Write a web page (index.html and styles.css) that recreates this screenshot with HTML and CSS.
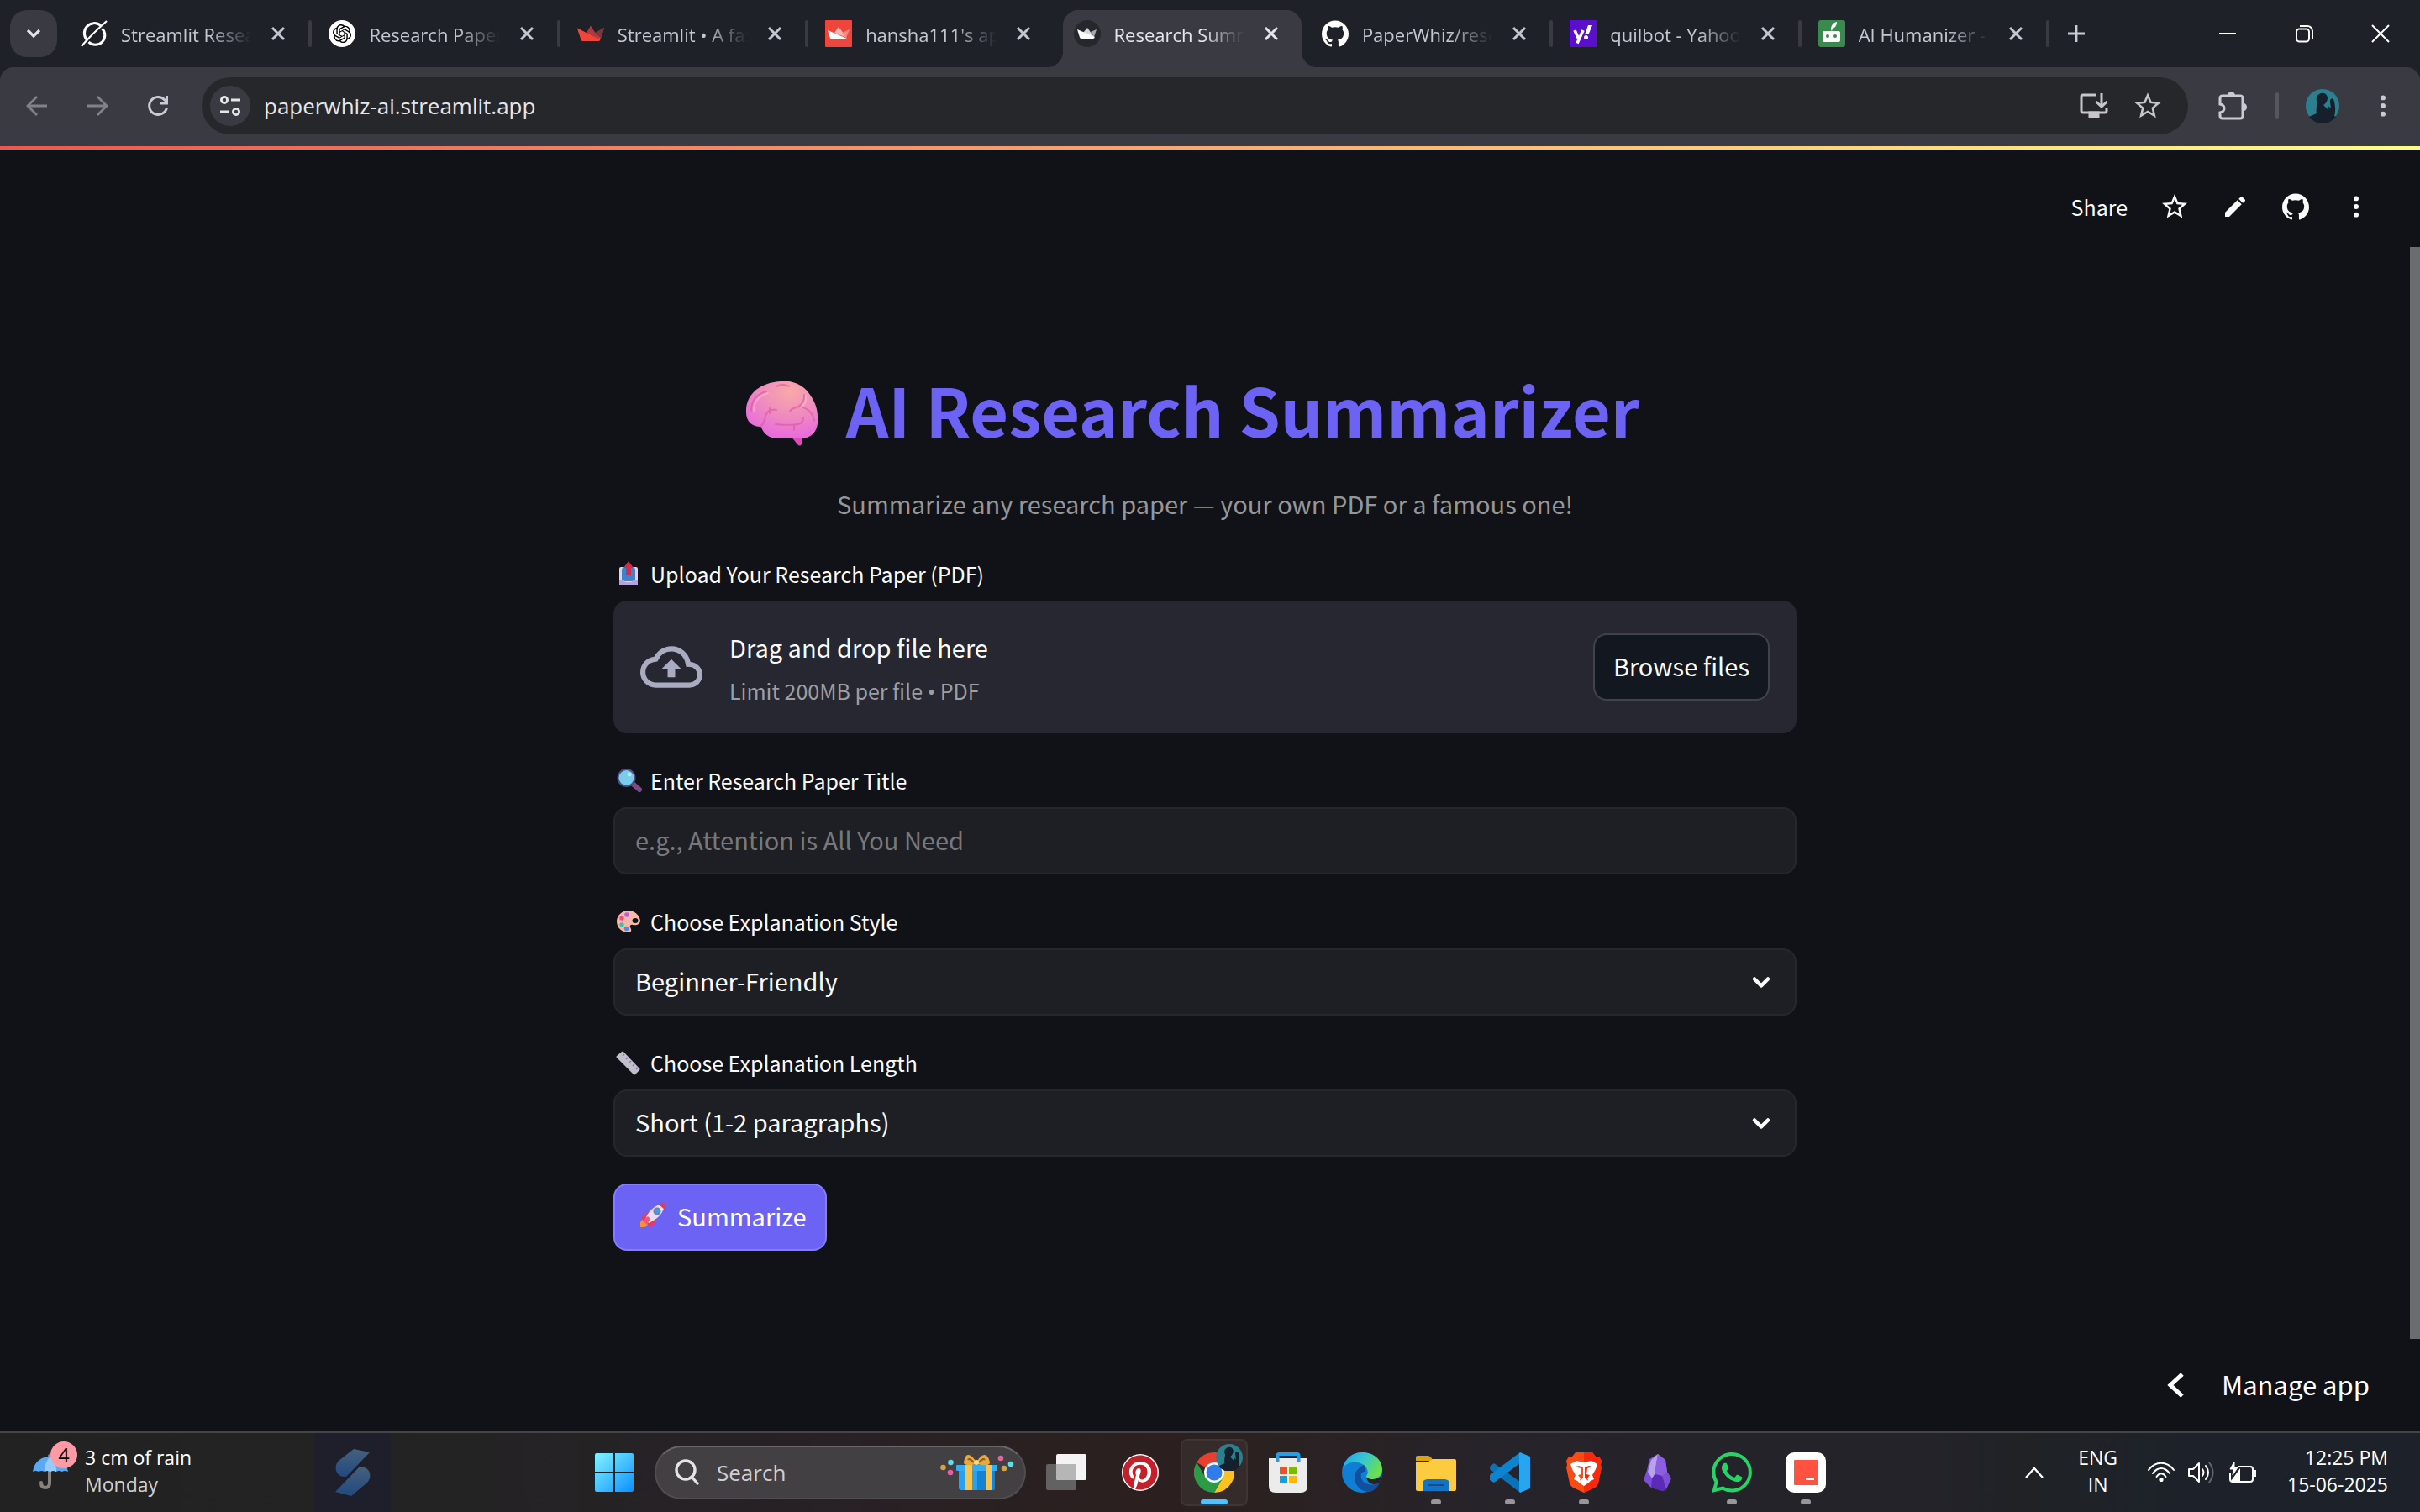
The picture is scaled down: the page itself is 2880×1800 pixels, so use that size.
FILE: index.html
```html
<!DOCTYPE html>
<html lang="en">
<head>
<meta charset="utf-8">
<title>Research Summarizer</title>
<link rel="stylesheet" href="styles.css">
</head>
<body>
<svg class="defs" width="0" height="0" aria-hidden="true">
  <defs>
    <symbol id="close" viewBox="0 0 32 32"><path d="M9 9l14 14M23 9L9 23" fill="none" stroke="currentColor" stroke-width="3"/></symbol>
    <symbol id="dots" viewBox="0 0 32 32"><circle cx="16" cy="5" r="3.4"/><circle cx="16" cy="16" r="3.4"/><circle cx="16" cy="27" r="3.4"/></symbol>
    <symbol id="star" viewBox="0 0 24 24"><path d="M22 9.24l-7.19-.62L12 2 9.19 8.63 2 9.24l5.46 4.73L5.82 21 12 17.27 18.18 21l-1.63-7.03L22 9.24zM12 15.4l-3.76 2.27 1-4.28-3.32-2.88 4.38-.38L12 6.1l1.71 4.04 4.38.38-3.32 2.88 1 4.28L12 15.4z"/></symbol>
    <symbol id="github" viewBox="0 0 24 24"><path d="M12 .297c-6.63 0-12 5.373-12 12 0 5.303 3.438 9.8 8.205 11.385.6.113.82-.258.82-.577 0-.285-.01-1.04-.015-2.04-3.338.724-4.042-1.61-4.042-1.61C4.422 18.07 3.633 17.7 3.633 17.7c-1.087-.744.084-.729.084-.729 1.205.084 1.838 1.236 1.838 1.236 1.07 1.835 2.809 1.305 3.495.998.108-.776.417-1.305.76-1.605-2.665-.3-5.466-1.332-5.466-5.93 0-1.31.465-2.38 1.235-3.22-.135-.303-.54-1.523.105-3.176 0 0 1.005-.322 3.3 1.23.96-.267 1.98-.399 3-.405 1.02.006 2.04.138 3 .405 2.28-1.552 3.285-1.23 3.285-1.23.645 1.653.24 2.873.12 3.176.765.84 1.23 1.91 1.23 3.22 0 4.61-2.805 5.625-5.475 5.92.42.36.81 1.096.81 2.22 0 1.606-.015 2.896-.015 3.286 0 .315.21.69.825.57C20.565 22.092 24 17.592 24 12.297c0-6.627-5.373-12-12-12"/></symbol>
    <symbol id="avatar" viewBox="0 0 40 40"><circle cx="20" cy="20" r="20" fill="#2b7f8e"/><path d="M4 33c3-2 7-3 9-4-1-4 0-9 1-13-2-2-2-8 2-10 5-3 10 0 10 5 0 3-2 5-3 7 3 1 5 3 7 5l-1-7c-1-3 2-6 4-4 2 5 3 14 1 20l2 1A20 20 0 0 1 4 33z" fill="#15202c"/><path d="M21 19l6-4v10z" fill="#2b7f8e"/></symbol>
    <symbol id="down" viewBox="0 0 24 24"><path d="M4 8.500l8 8 8-8" fill="none" stroke="currentColor" stroke-width="4.500" stroke-linecap="round" stroke-linejoin="round"/></symbol>
  </defs>
</svg>

<header class="browser">
  <div class="tabstrip">
    <button class="tab-search" aria-label="Search tabs"><svg width="24" height="24" viewBox="0 0 24 24"><path d="M5 8l7 7 7-7" fill="none" stroke="#e3e3e8" stroke-width="3.200"/></svg></button>
    <nav class="tabs" aria-label="Tabs">
      <div class="tab">
        <svg class="favicon" viewBox="0 0 32 32" fill="none" stroke="#fff"><path d="M24 6.500A11 11 0 1 0 8.500 24.500M9.500 26A11 11 0 0 0 25.500 10" stroke-width="3"/><path d="M31 1C22 9 6 25 1 31" stroke-width="2.200"/></svg>
        <span class="tab-title">Streamlit Research</span>
        <button class="tab-close" aria-label="Close tab"><svg width="32" height="32"><use href="#close"/></svg></button>
      </div>
      <div class="tab">
        <svg class="favicon" viewBox="0 0 32 32"><circle cx="16" cy="16" r="16" fill="#fff"/><path transform="translate(5 5) scale(.92)" d="M22.2819 9.8211a5.9847 5.9847 0 0 0-.5157-4.9108 6.0462 6.0462 0 0 0-6.5098-2.9A6.0651 6.0651 0 0 0 4.9807 4.1818a5.9847 5.9847 0 0 0-3.9977 2.9 6.0462 6.0462 0 0 0 .7427 7.0966 5.98 5.98 0 0 0 .511 4.9107 6.051 6.051 0 0 0 6.5146 2.9001A5.9847 5.9847 0 0 0 13.2599 24a6.0557 6.0557 0 0 0 5.7718-4.2058 5.9894 5.9894 0 0 0 3.9977-2.9001 6.0557 6.0557 0 0 0-.7475-7.0729zm-9.022 12.6081a4.4755 4.4755 0 0 1-2.8764-1.0408l.1419-.0804 4.7783-2.7582a.7948.7948 0 0 0 .3927-.6813v-6.7369l2.02 1.1686a.071.071 0 0 1 .038.052v5.5826a4.504 4.504 0 0 1-4.4945 4.4944zm-9.6607-4.1254a4.4708 4.4708 0 0 1-.5346-3.0137l.142.0852 4.783 2.7582a.7712.7712 0 0 0 .7806 0l5.8428-3.3685v2.3324a.0804.0804 0 0 1-.0332.0615L9.74 19.9502a4.4992 4.4992 0 0 1-6.1408-1.6464zM2.3408 7.8956a4.485 4.485 0 0 1 2.3655-1.9728V11.6a.7664.7664 0 0 0 .3879.6765l5.8144 3.3543-2.0201 1.1685a.0757.0757 0 0 1-.071 0l-4.8303-2.7865A4.504 4.504 0 0 1 2.3408 7.872zm16.5963 3.8558L13.1038 8.364 15.1192 7.2a.0757.0757 0 0 1 .071 0l4.8303 2.7913a4.4944 4.4944 0 0 1-.6765 8.1042v-5.6772a.79.79 0 0 0-.407-.667zm2.0107-3.0231l-.142-.0852-4.7735-2.7818a.7759.7759 0 0 0-.7854 0L9.409 9.2297V6.8974a.0662.0662 0 0 1 .0284-.0615l4.8303-2.7866a4.4992 4.4992 0 0 1 6.6802 4.66zM8.3065 12.863l-2.02-1.1638a.0804.0804 0 0 1-.038-.0567V6.0742a4.4992 4.4992 0 0 1 7.3757-3.4537l-.142.0805L8.704 5.459a.7948.7948 0 0 0-.3927.6813zm1.0976-2.3654l2.602-1.4998 2.6069 1.4998v2.9994l-2.5974 1.4997-2.6067-1.4997Z"/></svg>
        <span class="tab-title">Research Paper Summary</span>
        <button class="tab-close" aria-label="Close tab"><svg width="32" height="32"><use href="#close"/></svg></button>
      </div>
      <div class="tab">
        <svg class="favicon" viewBox="0 0 32 32"><path d="M0 9.500l11 6L16 7l5 8.500L32 9l-4.500 14q-.5 2-2.500 2H7q-2 0-2.500-2z" fill="#f0453a"/><path d="M21 15.500L32 9l-4 13z" fill="#7d353b"/><path d="M11 15.500L16 7l11 16z" fill="#ad3b3c"/><path d="M0 9.500l27 14q-1 1.500-2 1.500H7q-2 0-2.500-2z" fill="#f0453a"/></svg>
        <span class="tab-title">Streamlit • A faster way</span>
        <button class="tab-close" aria-label="Close tab"><svg width="32" height="32"><use href="#close"/></svg></button>
      </div>
      <div class="tab tab-plain">
        <svg class="favicon" viewBox="0 0 32 32"><rect width="32" height="32" rx="1" fill="#f0453a"/><path d="M11 15l5-7 10 13z" fill="#f9b5b0"/><path d="M20 15l9-4-4 10z" fill="#f58a83"/><path d="M3 12l23 10q-1 1-2 1H8q-1.500 0-2-1.500z" fill="#fff"/></svg>
        <span class="tab-title">hansha111's apps</span>
        <button class="tab-close" aria-label="Close tab"><svg width="32" height="32"><use href="#close"/></svg></button>
      </div>
      <div class="tab tab-plain tab-active" aria-current="page">
        <svg class="favicon" viewBox="0 0 32 32"><circle cx="16" cy="16" r="16" fill="#26272d"/><path d="M11 15l5-6 8 11z" fill="#d8d8da"/><path d="M20 14l7-3-3 9z" fill="#a9a9ad"/><path d="M4 11l21 9q-1 2-2 2H9q-1.500 0-2-1.500z" fill="#fff"/></svg>
        <span class="tab-title">Research Summarizer</span>
        <button class="tab-close" aria-label="Close tab"><svg width="32" height="32"><use href="#close"/></svg></button>
      </div>
      <div class="tab">
        <svg class="favicon" fill="#fff"><use href="#github"/></svg>
        <span class="tab-title">PaperWhiz/research</span>
        <button class="tab-close" aria-label="Close tab"><svg width="32" height="32"><use href="#close"/></svg></button>
      </div>
      <div class="tab">
        <svg class="favicon" viewBox="0 0 32 32"><rect width="32" height="32" fill="#5b0fce"/><path d="M6 12l4.500 10M16 12L9 27.500" stroke="#fff" stroke-width="3.600" fill="none"/><path d="M22 6h5l-4.500 11h-4.500z" fill="#fff"/><circle cx="19.500" cy="20.500" r="2.500" fill="#fff"/></svg>
        <span class="tab-title">quilbot - Yahoo Search</span>
        <button class="tab-close" aria-label="Close tab"><svg width="32" height="32"><use href="#close"/></svg></button>
      </div>
      <div class="tab">
        <svg class="favicon" viewBox="0 0 32 32"><rect width="32" height="32" rx="3" fill="#3a8a4d"/><rect x="5" y="13" width="21" height="13" rx="2" fill="#fff"/><path d="M15 11c0-4 2-8 7-9 0 4-2 7-5 8l-1 3z" fill="#fff"/><circle cx="11" cy="19" r="2" fill="#3a8a4d"/><circle cx="20" cy="19" r="2" fill="#3a8a4d"/></svg>
        <span class="tab-title">AI Humanizer - Free</span>
        <button class="tab-close" aria-label="Close tab"><svg width="32" height="32"><use href="#close"/></svg></button>
      </div>
    </nav>
    <button class="new-tab" aria-label="New tab"><svg width="24" height="24" viewBox="0 0 24 24"><path d="M12 2v20M2 12h20" stroke="#c9cbd4" stroke-width="2.800"/></svg></button>
    <div class="window-controls">
      <button aria-label="Minimize"><svg width="24" height="24" viewBox="0 0 24 24"><path d="M2 12h20" stroke="#fff" stroke-width="2"/></svg></button>
      <button aria-label="Restore"><svg width="24" height="24" viewBox="0 0 24 24" fill="none" stroke="#fff" stroke-width="2"><rect x="3" y="6.500" width="15" height="15" rx="3.500"/><path d="M7 3h9a6 6 0 0 1 6 6v9"/></svg></button>
      <button aria-label="Close"><svg width="24" height="24" viewBox="0 0 24 24"><path d="M2 2l20 20M22 2L2 22" stroke="#fff" stroke-width="2"/></svg></button>
    </div>
  </div>
  <div class="toolbar">
    <button class="nav-button" aria-label="Back"><svg width="32" height="32" viewBox="0 0 32 32" fill="none" stroke="#818289" stroke-width="2.800"><path d="M28 16H5M16 5L5 16l11 11"/></svg></button>
    <button class="nav-button" aria-label="Forward"><svg width="32" height="32" viewBox="0 0 32 32" fill="none" stroke="#818289" stroke-width="2.800"><path d="M4 16h23M16 5l11 11-11 11"/></svg></button>
    <button class="nav-button" aria-label="Reload"><svg width="32" height="32" viewBox="0 0 32 32" fill="none" stroke="#c9cbd4" stroke-width="3"><path d="M26.500 18A10.500 10.500 0 1 1 24 9l3 3"/><path d="M26.500 4v9H18"/></svg></button>
    <div class="omnibox">
      <button class="site-info" aria-label="View site information"><svg width="28" height="28" viewBox="0 0 28 28" fill="none" stroke="#e6e6ea" stroke-width="2.800"><circle cx="7" cy="7" r="3.600"/><path d="M15 7h11M2 21h11"/><circle cx="21" cy="21" r="3.600"/></svg></button>
      <input class="address" type="text" aria-label="Address" value="paperwhiz-ai.streamlit.app">
      <button aria-label="Install app"><svg width="36" height="32" viewBox="0 0 36 32" fill="none" stroke="#c8c6c8" stroke-width="3"><path d="M20 3H5q-2 0-2 2v17q0 2 2 2h26q2 0 2-2v-4M27 1v15M20.500 11l6.500 6 6.500-6"/><path d="M13 24v5h10v-5z" fill="#c8c6c8"/></svg></button>
      <button aria-label="Bookmark this tab"><svg width="38" height="38" fill="#c8c6c8"><use href="#star"/></svg></button>
    </div>
    <button class="tool" aria-label="Extensions"><svg width="38" height="38" viewBox="0 0 38 38"><path d="M5 12V10q0-3 3-3h21q3 0 3 3v21q0 3-3 3H8q-3 0-3-3v-4q5-1 5-5t-5-5z" fill="none" stroke="#c9cbd4" stroke-width="3"/><path d="M14 7a4.500 5 0 0 1 9 0zM33 16a4 4.500 0 0 1 0 9z" fill="#c9cbd4"/></svg></button>
    <span class="tool-divider"></span>
    <button class="tool" aria-label="Profile"><svg width="40" height="40"><use href="#avatar"/></svg></button>
    <button class="tool" aria-label="Browser menu"><svg width="28" height="28" fill="#c9cbd4"><use href="#dots"/></svg></button>
  </div>
</header>

<div class="app">
  <div class="accent"></div>
  <header class="app-header">
    <button class="share">Share</button>
    <button aria-label="Favorite"><svg width="36" height="36" fill="#fafafa"><use href="#star"/></svg></button>
    <button aria-label="Edit"><svg width="32" height="32" viewBox="0 0 24 24" fill="#fafafa"><path d="M3 17.250V21h3.750L17.810 9.940l-3.750-3.750L3 17.250zM20.710 7.040a1 1 0 0 0 0-1.410l-2.340-2.340a1 1 0 0 0-1.410 0l-1.830 1.830 3.750 3.750 1.830-1.830z"/></svg></button>
    <button aria-label="View source"><svg width="32" height="32" fill="#fafafa"><use href="#github"/></svg></button>
    <button aria-label="App menu"><svg width="28" height="28" fill="#fafafa"><use href="#dots"/></svg></button>
  </header>

  <div class="scroll-area">
    <main class="content">
      <h1 class="title">
        <svg width="88" height="78" viewBox="0 0 88 78" aria-hidden="true">
          <defs><radialGradient id="brain" cx=".62" cy=".18" r=".85"><stop offset="0" stop-color="#f9aaa6"/><stop offset=".5" stop-color="#ef8cbf"/><stop offset="1" stop-color="#e868e0"/></radialGradient></defs>
          <path d="M54 66h14l-1 10q-2 3-5 0z" fill="#e04ab8"/>
          <path d="M43 1C58-1 72 7 79 20c6 9 8 20 7 31-1 11-9 18-19 18H39c-11 0-18-6-20-14C8 55 1 49 1 38 0 16 18 2 43 1z" fill="url(#brain)"/>
          <g fill="none" stroke-linecap="round" stroke-width="2"><path d="M7 36c0-13 7-20 18-23M37 7q8-4 15 0M70 17c1 8-4 12-7 14-6 3-9 2-10 6M63 31c10 1 17 7 19 17M36 52c10 1 22 2 30-1 3-3 3-5 3-7M58 53v6M37 35c-7-1-10 0-13 7-1 7-3 10-6 13M29 33v6" stroke="#d9559c" opacity=".6"/><path d="M10 36c0-11 7-18 17-21M72 18c1 8-3 12-6 14" stroke="#ffc3d5" opacity=".5"/></g>
        </svg>
        <span>AI Research Summarizer</span>
      </h1>
      <p class="subtitle">Summarize any research paper — your own PDF or a famous one!</p>

      <form class="form">
        <div class="field">
          <label class="label" for="upload">
            <svg width="32" height="32" viewBox="0 0 32 32" aria-hidden="true"><rect x="5" y="8" width="22" height="22" rx="2" fill="#ded3ef"/><rect x="8" y="9" width="16" height="16" rx="2" fill="#3b82cf"/><path d="M5 24h5q2 0 2 2h8q0-2 2-2h5v6H5z" fill="#b6a2dd"/><path d="M16 1l6 8h-3v9h-6V9h-3z" fill="#d02f4c"/></svg>
            Upload Your Research Paper (PDF)
          </label>
          <div class="dropzone">
            <svg class="cloud" width="74" height="74" viewBox="0 0 24 24" fill="#a9acc0" aria-hidden="true"><path d="M19.350 10.040A7.490 7.490 0 0012 4C9.110 4 6.600 5.640 5.350 8.040A5.994 5.994 0 000 14c0 3.310 2.690 6 6 6h13c2.760 0 5-2.240 5-5 0-2.640-2.050-4.780-4.650-4.960zM19 18H6c-2.210 0-4-1.790-4-4 0-2.050 1.530-3.760 3.560-3.970l1.070-.11.5-.95A5.469 5.469 0 0112 6c2.620 0 4.880 1.860 5.390 4.430l.3 1.500 1.530.11A2.980 2.980 0 0122 15c0 1.650-1.350 3-3 3zM8 13h2.550v3h2.900v-3H16l-4-4z"/></svg>
            <div class="drop-text">
              <span class="drop-title">Drag and drop file here</span>
              <span class="drop-hint">Limit 200MB per file <span class="bullet">•</span> PDF</span>
            </div>
            <button id="upload" class="browse" type="button">Browse files</button>
          </div>
        </div>
        <div class="field">
          <label class="label" for="paper">
            <svg width="32" height="32" viewBox="0 0 32 32" aria-hidden="true"><path d="M21 20l8 7" stroke="#7d4a86" stroke-width="6" stroke-linecap="round"/><circle cx="13.500" cy="13" r="10" fill="#79cdea" stroke="#4b4f86" stroke-width="2"/><circle cx="17" cy="9" r="2.500" fill="#b6e8f7"/></svg>
            Enter Research Paper Title
          </label>
          <input id="paper" class="control" type="text" placeholder="e.g., Attention is All You Need">
        </div>
        <div class="field">
          <label class="label" for="style">
            <svg width="32" height="32" viewBox="0 0 32 32" aria-hidden="true"><path d="M16 3C8 3 2 9 2 16c0 8 7 13 13 13 5 0 5-3 3-6-1-2 1-4 3-3 5 1 9-1 9-5C29 8 23 3 16 3z" fill="#f6b9a8"/><ellipse cx="24" cy="15" rx="3.500" ry="3" fill="#111217"/><circle cx="14" cy="8" r="2.700" fill="#b35de8"/><circle cx="8" cy="12" r="2.700" fill="#ec4c8d"/><circle cx="8" cy="20" r="2.700" fill="#46b9b0"/><circle cx="13.500" cy="24.500" r="2.700" fill="#4d8df2"/></svg>
            Choose Explanation Style
          </label>
          <div class="select">
            <select id="style" class="control"><option>Beginner-Friendly</option></select>
            <svg class="chevron" width="24" height="24"><use href="#down"/></svg>
          </div>
        </div>
        <div class="field">
          <label class="label" for="length">
            <svg width="32" height="32" viewBox="0 0 32 32" aria-hidden="true"><path d="M2 8l6-5q1-1 2 0l19 20q1 1 0 2l-5 5q-1 1-2 0L2 10q-1-1 0-2z" fill="#c3bfca"/><path d="M11 6l-2 2M15 10l-2 2M19 14l-2 2M23 18l-2 2M27 22l-2 2" stroke="#8a72c8" stroke-width="1.500"/></svg>
            Choose Explanation Length
          </label>
          <div class="select">
            <select id="length" class="control"><option>Short (1-2 paragraphs)</option></select>
            <svg class="chevron" width="24" height="24"><use href="#down"/></svg>
          </div>
        </div>
        <button class="submit" type="button">
          <svg width="34" height="34" viewBox="0 0 34 34" aria-hidden="true"><path d="M2 25q2-4 6-4l4 4q-2 5-5 6H2z" fill="#f59331"/><path d="M3 20l6-6 6-1-8 12zM21 19l-1 7-7 6-3-7z" fill="#e23c64"/><path d="M8 22C11 12 19 4 31 3c0 10-8 18-19 23z" fill="#e6e0ee"/><path d="M24 4q4-2 8-2 1 4-1 8z" fill="#e23c50"/><circle cx="22" cy="12" r="3.800" fill="#4d93e8" stroke="#7c7d9e" stroke-width="1.500"/><path d="M5 23l6-5 3 3-4 7z" fill="#f2557c"/></svg>
          Summarize
        </button>
      </form>
    </main>
    <div class="scrollbar"></div>
  </div>

  <footer class="app-footer">
    <button class="manage"><svg width="22" height="32" viewBox="0 0 22 32"><path d="M19 3L5 16l14 13" fill="none" stroke="#fff" stroke-width="5"/></svg><span>Manage app</span></button>
  </footer>
</div>

<footer class="taskbar">
  <div class="task-left">
    <button class="weather">
      <span class="weather-icon">
        <svg width="48" height="44" viewBox="0 0 48 44"><path d="M24 2v32q0 6-5 6t-5-6" fill="none" stroke="#8a8280" stroke-width="4" stroke-linecap="round" transform="translate(-1 0)"/><path d="M3 21C5 8 14 3 24 3s19 5 21 18q-4-2-7 0-4-2-7 0-4-2-7 0-4-2-7 0-4-2-7 0-4-2-7 0z" fill="#5aa9f2"/><path d="M17 21c0-9 3-14 7-18 5 4 7 9 7 18q-4-2-7 0-4-2-7 0z" fill="#97ccfa"/></svg>
        <span class="badge">4</span>
      </span>
      <span class="lines"><span>3 cm of rain</span><span class="muted">Monday</span></span>
    </button>
    <span class="widget"><svg width="44" height="58" viewBox="0 0 44 58"><defs><linearGradient id="sg" x1="0" y1="0" x2="0" y2="1"><stop offset="0" stop-color="#46607c"/><stop offset="1" stop-color="#204a80"/></linearGradient></defs><path d="M23 1l19 4-28 29C5 35 0 28 2 20q1-3 3-5z" fill="url(#sg)"/><path d="M30 22c8 0 14 5 12 14q-1 3-3 5L20 57 1 52z" fill="url(#sg)"/></svg></span>
  </div>

  <div class="task-center">
    <button class="task" aria-label="Start"><svg width="46" height="46" viewBox="0 0 46 46"><defs><linearGradient id="win" x1="0" y1="0" x2="1" y2="1"><stop offset="0" stop-color="#82f3ff"/><stop offset="1" stop-color="#0c90ff"/></linearGradient></defs><path d="M2 0h20v22H0V2q0-2 2-2zM24 0h20q2 0 2 2v20H24zM0 24h22v22H2q-2 0-2-2zM24 24h22v20q0 2-2 2H24z" fill="url(#win)"/></svg></button>
    <label class="search">
      <svg width="30" height="32" viewBox="0 0 30 32" fill="none" stroke="#e4e4e6" stroke-width="3.400" stroke-linecap="round"><circle cx="13" cy="13" r="11"/><path d="M20 21l7 8"/></svg>
      <input type="text" placeholder="Search" aria-label="Search">
      <svg width="88" height="44" viewBox="0 0 88 44"><path d="M22 15h43v25q0 3-3 3H25q-3 0-3-3z" fill="#2aa0ee"/><path d="M44 20h21v20q0 3-3 3H44z" fill="#1683d2"/><rect x="19" y="13" width="49" height="7" rx="1" fill="#35abf2"/><path d="M30 13h8v30h-8zM55 13h6v30h-6z" fill="#f5c451"/><path d="M43 12C35 14 28 14 28 10c1-6 3-9 5-9 4 0 8 5 10 9 2-4 6-9 10-9 2 0 5 3 6 9 0 4-7 4-16 2z" fill="#e8a83c"/><path d="M40 10c-4-4-6-5-7-3M46 10c4-4 6-5 7-3" stroke="#8c5b1a" stroke-width="2" fill="none"/><circle cx="43" cy="10" r="3" fill="#ffd775"/><circle cx="3.500" cy="16" r="3.300" fill="#d0a544"/><circle cx="12.500" cy="10" r="3.300" fill="#5fdde8"/><circle cx="12" cy="22" r="3.300" fill="#ef5ba1"/><circle cx="72" cy="5" r="3.300" fill="#ef5ba1"/><circle cx="84" cy="12" r="3.300" fill="#5fdde8"/><circle cx="76" cy="17" r="3.300" fill="#d0a544"/></svg>
    </label>
    <button class="task" aria-label="Task view"><svg width="48" height="46" viewBox="0 0 48 46"><rect y="13" width="36" height="31" rx="2" fill="#626262"/><rect x="12" y="1" width="36" height="31" rx="2" fill="#f4f4f4"/><path d="M12 13h24v19H14q-2 0-2-2z" fill="#b6b6b6"/></svg></button>
    <button class="task" aria-label="Pinterest"><svg width="44" height="44" viewBox="0 0 24 24"><circle cx="12" cy="12" r="12" fill="#fff"/><g transform="translate(.8 .8) scale(.933)"><path fill="#c2202a" d="M12.017 0C5.396 0 .029 5.367.029 11.987c0 5.079 3.158 9.417 7.618 11.162-.105-.949-.199-2.403.041-3.439.219-.937 1.406-5.957 1.406-5.957s-.359-.72-.359-1.781c0-1.663.967-2.911 2.168-2.911 1.024 0 1.518.769 1.518 1.688 0 1.029-.653 2.567-.992 3.992-.285 1.193.6 2.165 1.775 2.165 2.128 0 3.768-2.245 3.768-5.487 0-2.861-2.063-4.869-5.008-4.869-3.410 0-5.409 2.562-5.409 5.199 0 1.033.394 2.143.889 2.741.099.12.112.225.085.345-.09.375-.293 1.199-.334 1.363-.053.225-.172.271-.401.165-1.495-.69-2.433-2.878-2.433-4.646 0-3.776 2.748-7.252 7.920-7.252 4.158 0 7.392 2.967 7.392 6.923 0 4.135-2.607 7.462-6.233 7.462-1.214 0-2.354-.629-2.758-1.379l-.749 2.848c-.269 1.045-1.004 2.352-1.498 3.146 1.123.345 2.306.535 3.550.535 6.607 0 11.985-5.365 11.985-11.987C23.970 5.390 18.592.026 11.985.026L12.017 0z"/></g></svg></button>
    <button class="task task-current" aria-label="Chrome"><svg width="48" height="48" viewBox="0 0 48 48"><path d="M24 24L3.200 12A24 24 0 0 1 44.800 12z" fill="#e8402f"/><path d="M24 12h20.800A24 24 0 0 1 24 48L34.400 30z" fill="#fcc31e"/><path d="M3.200 12L13.600 30 24 36l10.400-6L24 48A24 24 0 0 1 3.200 12z" fill="#2a9c46"/><circle cx="24" cy="24" r="12" fill="#fff"/><circle cx="24" cy="24" r="9.500" fill="#2f7cea"/></svg><svg class="profile" width="32" height="32"><use href="#avatar"/></svg></button>
    <button class="task" aria-label="Store"><svg width="48" height="48" viewBox="0 0 48 48"><path d="M1 7h46v33q0 8-8 8H9q-8 0-8-8z" fill="#ececec"/><path d="M11.500 11V4q0-2 2-2h21q2 0 2 2v7" fill="none" stroke="#20a0ec" stroke-width="4"/><path d="M14 17h9v9h-9z" fill="#f25022"/><path d="M25 17h9v9h-9z" fill="#7fba00"/><path d="M14 28h9v9h-9z" fill="#00a4ef"/><path d="M25 28h9v9h-9z" fill="#ffb900"/></svg></button>
    <button class="task" aria-label="Edge"><svg width="48" height="48" viewBox="0 0 48 48"><defs><linearGradient id="eg" x1="0" y1="0" x2="1" y2=".5"><stop offset="0" stop-color="#1f9fe8"/><stop offset=".5" stop-color="#35c6d6"/><stop offset="1" stop-color="#6be04a"/></linearGradient></defs><circle cx="24" cy="24" r="24" fill="#0f7fd6"/><path d="M1 19C4 7 13 0 24 0c15 0 24 10 24 20 0 8-6 12-12 12-5 0-8-2-7-4 3-3 2-9-3-13C17 9 5 12 1 19z" fill="url(#eg)"/><path d="M26 15c-6 3-11 8-11 15 0 10 9 18 19 17 5-2 9-6 11-11-9 5-21 2-22-6-1-5 1-7 4-7 1-3 1-6-1-8z" fill="#124f9c"/><path d="M48 26l-3 10c-7 4-15 2-16-8 0 2 3 4 7 4 5 0 10-2 12-6z" fill="#27212a"/></svg></button>
    <button class="task task-open" aria-label="File Explorer"><svg width="48" height="48" viewBox="0 0 48 48"><path d="M0 6q0-2 2-2h12q2 0 4 2l3 4H0z" fill="#e0a30a"/><path d="M0 11h15l5-3h26q2 0 2 2v34q0 2-2 2H2q-2 0-2-2z" fill="#fccb3f"/><path d="M8 46V38q0-6 6-6h20q6 0 6 6v8z" fill="#1272c4"/><path d="M15 39h18" stroke="#0b4b8a" stroke-width="2"/></svg></button>
    <button class="task task-open" aria-label="Visual Studio Code"><svg width="48" height="48" viewBox="0 0 48 48"><path d="M0 17l5-4 31 22v13L0 20z" fill="#0a72b8"/><path d="M0 30v-3L36 0v13L5 36l-5-3z" fill="#0d84cf"/><path d="M36 0l12 5v38l-12 5-1-2V2z" fill="#27a5ee"/></svg></button>
    <button class="task task-open" aria-label="Brave"><svg width="48" height="48" viewBox="0 0 48 48"><path d="M14 0h20l4 5 4 0 3 5-1 5 1 3-4 19q-1 3-4 5L24 48 11 42q-3-2-4-5L3 18l1-3-1-5 3-5h4z" fill="#fb4b14"/><path d="M24 0h10l4 5h4l3 5-1 5 1 3-4 19q-1 3-4 5L24 48z" fill="#f9280c"/><path d="M8 14l7-4 9 2 9-2 7 4-2 6-4 7 2 5-6 3-2-4 3-4-4-1 1-7 6-2-4-1-5 2v12h-2V18l-5-2-4 1 6 2 1 7-4 1 3 4-2 4-6-3 2-5-4-7zM24 30l7 5-7 5-7-5z" fill="#fff"/></svg></button>
    <button class="task" aria-label="Obsidian"><svg width="48" height="48" viewBox="0 0 48 48"><path d="M24 2l9 7 2 14 5 8-6 13-4 2-14-4-9-9 4-12 3-13z" fill="#7d4fd6"/><path d="M24 2l-8 7-4 14 5 8 3-5z" fill="#b7a3ea"/><path d="M24 2l9 7 2 14-6 5-9-2z" fill="#8b5fe0"/><path d="M17 31l4-5 8 2 5 16-4 2-14-4z" fill="#5a2bb8"/></svg></button>
    <button class="task task-open" aria-label="WhatsApp"><svg width="48" height="48" viewBox="0 0 24 24"><path fill="#25d366" d="M17.472 14.382c-.297-.149-1.758-.867-2.030-.967-.273-.099-.471-.148-.670.150-.197.297-.767.966-.940 1.164-.173.199-.347.223-.644.075-.297-.150-1.255-.463-2.390-1.475-.883-.788-1.480-1.761-1.653-2.059-.173-.297-.018-.458.130-.606.134-.133.298-.347.446-.520.149-.174.198-.298.298-.497.099-.198.050-.371-.025-.520-.075-.149-.669-1.612-.916-2.207-.242-.579-.487-.500-.669-.510-.173-.008-.371-.010-.570-.010-.198 0-.520.074-.792.372-.272.297-1.040 1.016-1.040 2.479 0 1.462 1.065 2.875 1.213 3.074.149.198 2.096 3.200 5.077 4.487.709.306 1.262.489 1.694.625.712.227 1.360.195 1.871.118.571-.085 1.758-.719 2.006-1.413.248-.694.248-1.289.173-1.413-.074-.124-.272-.198-.570-.347m-5.421 7.403h-.004a9.870 9.870 0 01-5.031-1.378l-.361-.214-3.741.982.998-3.648-.235-.374a9.860 9.860 0 01-1.510-5.260c.001-5.450 4.436-9.884 9.888-9.884 2.640 0 5.122 1.030 6.988 2.898a9.825 9.825 0 012.893 6.994c-.003 5.450-4.437 9.884-9.885 9.884m8.413-18.297A11.815 11.815 0 0012.050 0C5.495 0 .160 5.335.157 11.892c0 2.096.547 4.142 1.588 5.945L.057 24l6.305-1.654a11.882 11.882 0 005.683 1.448h.005c6.554 0 11.890-5.335 11.893-11.893a11.821 11.821 0 00-3.480-8.413z"/></svg></button>
    <button class="task task-open" aria-label="Notes"><svg width="48" height="48" viewBox="0 0 48 48"><rect width="48" height="48" rx="10" fill="#fff"/><rect x="10" y="9" width="29" height="30" rx="1" fill="#ff5240"/><path d="M24 30h10v3H24z" fill="#fff"/></svg></button>
  </div>

  <div class="task-right">
    <button class="tray-more" aria-label="Show hidden icons"><svg width="24" height="16" viewBox="0 0 24 16"><path d="M2 14L12 3l10 11" fill="none" stroke="#fff" stroke-width="2.400"/></svg></button>
    <button class="lines language"><span>ENG</span><span>IN</span></button>
    <button class="status" aria-label="Network, volume and battery">
      <svg width="32" height="26" viewBox="0 0 32 26" fill="none" stroke="#fff" stroke-width="2"><path d="M1 10C9-1 23-1 31 10M6 14C12 6 20 6 26 14M10.500 18C14 13 18 13 21.500 18" stroke-linecap="round"/><circle cx="16" cy="21.500" r="2.600" fill="#fff" stroke="none"/></svg>
      <svg width="32" height="28" viewBox="0 0 32 28" fill="none" stroke="#fff" stroke-width="2" stroke-linecap="round"><path d="M1 10h5l7-7v22l-7-7H1z" stroke-linejoin="round"/><path d="M17 10q3 4 0 8M21 6q6 8 0 16"/><path d="M25 2q9 12 0 24" stroke="#64666b"/></svg>
      <svg width="34" height="28" viewBox="0 0 34 28" fill="none" stroke="#fff" stroke-width="2"><path d="M11 7h15q3 0 3 3v12q0 3-3 3H5q-3 0-3-3v-8"/><path d="M13 12v11H5z" fill="#fff"/><path d="M29 12h3v6h-3z" fill="#fff"/><path d="M7 1L2 10h4l-1 7 6-9H7z" fill="#fff" stroke-width="1"/></svg>
    </button>
    <button class="lines clock"><span>12:25 PM</span><span>15-06-2025</span></button>
  </div>
</footer>
</body>
</html>
```
FILE: styles.css
```css
:root {
  --system: "Open Sans", "Noto Sans", sans-serif;
  --page: "Noto Sans CJK SC", "Noto Sans CJK JP", sans-serif;
  --strip: #1f2129;
  --toolbar: #3a3b42;
  --chrome-text: #c5c7d0;
  --bg: #111217;
  --field: #1e1f24;
  --border: #26272c;
  --accent: #6c63f5;
}

* {
  box-sizing: border-box;
}

body {
  margin: 0;
  min-height: 100vh;
  display: flex;
  flex-direction: column;
  background: var(--bg);
  color: #fafafa;
  font-family: var(--system);
}

button,
input,
select {
  margin: 0;
  padding: 0;
  border: 0;
  background: none;
  color: inherit;
  font: inherit;
}

svg {
  display: block;
  flex: none;
}

.defs {
  position: absolute;
}

/* Browser window */

.browser {
  background: var(--strip);
}

.tabstrip {
  display: flex;
  align-items: center;
  height: 80px;
  padding-left: 12px;
  font-size: 22px;
  color: var(--chrome-text);
}

.tab-search {
  display: grid;
  place-items: center;
  width: 56px;
  height: 56px;
  margin-right: 8px;
  border-radius: 20px;
  background: var(--toolbar);
}

.tabs {
  display: flex;
  flex: 0 1 2363px;
  min-width: 0;
}

.tab {
  position: relative;
  display: flex;
  flex: 1 1 0;
  align-items: center;
  min-width: 0;
  height: 80px;
  padding-left: 20px;
}

.tab::after {
  content: "";
  width: 4px;
  height: 32px;
  margin-left: 20px;
  border-radius: 2px;
  background: var(--toolbar);
}

.tab-plain::after {
  background: none;
}

.tab-active {
  color: #e6e6ea;
}

.tab-active::before {
  content: "";
  position: absolute;
  inset: 12px -16px 0 -13px;
  background:
    radial-gradient(circle at 0 0, transparent 20px, var(--toolbar) 21px) left bottom / 20px 20px no-repeat,
    radial-gradient(circle at 100% 0, transparent 20px, var(--toolbar) 21px) right bottom / 20px 20px no-repeat,
    radial-gradient(circle at 100% 100%, var(--toolbar) 20px, transparent 21px) 20px 0 / 20px 20px no-repeat,
    radial-gradient(circle at 0 100%, var(--toolbar) 20px, transparent 21px) calc(100% - 20px) 0 / 20px 20px no-repeat,
    linear-gradient(var(--toolbar), var(--toolbar)) center / calc(100% - 80px) 100% no-repeat,
    linear-gradient(var(--toolbar), var(--toolbar)) center 100% / calc(100% - 40px) calc(100% - 20px) no-repeat;
}

.tab-active > * {
  position: relative;
}

.favicon {
  width: 32px;
  height: 32px;
}

.tab-title {
  flex: 1;
  min-width: 0;
  margin: 0 16px;
  padding-top: 2px;
  overflow: hidden;
  white-space: nowrap;
  mask-image: linear-gradient(90deg, #000 calc(100% - 50px), transparent);
}

.new-tab {
  padding: 20px;
}

.window-controls {
  display: flex;
  margin-left: auto;
  padding-right: 2px;
}

.window-controls button {
  display: grid;
  place-items: center;
  width: 91px;
  height: 80px;
}

.toolbar {
  display: flex;
  align-items: center;
  height: 94px;
  padding: 0 16px 2px 8px;
  border-radius: 16px 16px 0 0;
  background: var(--toolbar);
}

.nav-button {
  display: grid;
  place-items: center;
  width: 72px;
  height: 72px;
}

.omnibox {
  display: flex;
  flex: 1;
  align-items: center;
  gap: 27px;
  height: 68px;
  margin: 0 24px 0 16px;
  padding: 0 29px 0 10px;
  border-radius: 34px;
  background: #26272b;
}

.site-info {
  display: grid;
  place-items: center;
  width: 48px;
  height: 48px;
  margin-right: -11px;
  border-radius: 50%;
  background: var(--toolbar);
}

.address {
  flex: 1;
  min-width: 0;
  color: #e6e6ea;
  font-size: 26px;
}

.tool {
  display: grid;
  place-items: center;
  width: 56px;
  height: 56px;
}

.tool + .tool {
  margin-left: 16px;
}

.tool-divider {
  width: 4px;
  height: 32px;
  margin: 0 24px;
  border-radius: 2px;
  background: #56575e;
}

/* Streamlit page */

.app {
  display: flex;
  flex: 1;
  flex-direction: column;
  font-family: var(--page);
}

.accent {
  height: 4px;
  background: linear-gradient(90deg, #f0564f, #fca96f 50%, #fffd80);
}

.app-header {
  display: flex;
  align-items: center;
  justify-content: flex-end;
  height: 116px;
  padding: 20px 56px 0 0;
}

.app-header button {
  display: grid;
  place-items: center;
  width: 40px;
  height: 56px;
  margin-left: 32px;
}

.app-header .share {
  width: auto;
  margin: 0 4px 0 0;
  font-size: 25px;
}

.scroll-area {
  display: flex;
  flex: 1;
}

.content {
  flex: 1;
  padding: 145px 40px 105px;
}

.title {
  display: flex;
  align-items: center;
  justify-content: center;
  gap: 32px;
  margin: 0;
  padding-right: 30px;
  color: var(--accent);
  font-size: 79px;
  font-weight: 700;
  line-height: 96px;
}

.title svg {
  margin-top: 10px;
}

.subtitle {
  margin: 40px 0 38px;
  color: #969696;
  font-size: 29px;
  line-height: 48px;
  text-align: center;
}

.form {
  max-width: 1408px;
  margin: 0 auto;
}

.field + .field {
  margin-top: 34px;
}

.label {
  display: flex;
  align-items: center;
  gap: 10px;
  width: fit-content;
  margin-bottom: 12px;
  padding: 2px 0 0 2px;
  font-size: 25px;
  line-height: 40px;
}

.dropzone {
  display: flex;
  align-items: center;
  gap: 32px;
  min-height: 158px;
  padding: 0 32px;
  border-radius: 16px;
  background: #262730;
}

.drop-text {
  display: flex;
  flex: 1;
  flex-direction: column;
  gap: 4px;
  padding-top: 4px;
}

.drop-title {
  font-size: 29px;
  line-height: 48px;
}

.drop-hint {
  color: #9d9ea4;
  font-size: 25px;
  line-height: 48px;
}

.bullet {
  font-family: var(--system);
}

.browse {
  height: 80px;
  padding: 0 22px 4px;
  border: 2px solid #41434b;
  border-radius: 16px;
  background: #131720;
  font-size: 29px;
}

.control {
  display: block;
  width: 100%;
  height: 80px;
  padding: 0 24px 4px;
  border: 2px solid var(--border);
  border-radius: 16px;
  background: var(--field);
  font-size: 29px;
  appearance: none;
}

.control::placeholder {
  color: #77787c;
  opacity: 1;
}

.select {
  display: grid;
  align-items: center;
}

.select > * {
  grid-area: 1 / 1;
}

.chevron {
  justify-self: end;
  margin-right: 30px;
  pointer-events: none;
}

.submit {
  display: flex;
  align-items: center;
  gap: 12px;
  height: 80px;
  margin-top: 32px;
  padding: 0 22px 4px 28px;
  border: 2px solid #857dff;
  border-radius: 16px;
  background: var(--accent);
  color: #fff;
  font-size: 29px;
}

.scrollbar {
  width: 12px;
  background: #6b6c70;
}

.app-footer {
  display: flex;
  align-items: center;
  justify-content: flex-end;
  height: 110px;
  padding-right: 60px;
}

.manage {
  display: flex;
  align-items: center;
  gap: 44px;
  color: #fff;
  font-size: 31px;
}

.manage span {
  padding-bottom: 4px;
}

/* Windows taskbar */

.taskbar {
  display: grid;
  grid-template-columns: 1fr auto 1fr;
  align-items: center;
  height: 96px;
  border-top: 2px solid #454547;
  background: linear-gradient(90deg, #222223 0, #242324 20%, #272126 32%, #2b201f 47%, #2b2121 52%, #26232a 62%, #232329 80%, #202226 84%, #1d222a 90%);
  font-size: 23px;
  line-height: 32px;
}

.task-left {
  display: flex;
  align-items: center;
  padding-left: 36px;
}

.lines {
  display: flex;
  flex-direction: column;
  padding-bottom: 4px;
  color: #fff;
}

.muted {
  color: #cfcfcf;
}

.weather {
  display: flex;
  align-items: center;
  gap: 17px;
  min-width: 339px;
  text-align: left;
}

.weather-icon {
  position: relative;
}

.badge {
  position: absolute;
  top: -15px;
  left: 24px;
  width: 32px;
  height: 32px;
  border-radius: 50%;
  background: #ff99a4;
  color: #000;
  text-align: center;
}

.widget {
  display: grid;
  place-items: center;
  width: 90px;
  height: 94px;
  background: #1e1f2a;
}

.task-center {
  display: flex;
  align-items: center;
  gap: 8px;
}

.task {
  position: relative;
  display: grid;
  place-items: center;
  width: 80px;
  height: 80px;
  border-radius: 8px;
}

.task-current {
  border: 2px solid #3f3534;
  background: #352b2a;
}

.task-open::after,
.task-current::after {
  content: "";
  position: absolute;
  bottom: 2px;
  width: 12px;
  height: 6px;
  border-radius: 3px;
  background: #98969a;
}

.task-current::after {
  bottom: 0;
  width: 32px;
  background: #4cc2ff;
}

.profile {
  position: absolute;
  top: 4px;
  right: 4px;
}

.search {
  display: flex;
  align-items: center;
  gap: 20px;
  width: 442px;
  height: 64px;
  padding: 0 12px 0 22px;
  border: 2px solid #514d50;
  border-top-color: #6a666a;
  border-radius: 32px;
  background: #434044;
}

.search input {
  flex: 1;
  min-width: 0;
  font-size: 26px;
}

.search input::placeholder {
  color: #d0cfd0;
  opacity: 1;
}

.task-right {
  display: flex;
  align-items: center;
  justify-content: flex-end;
  padding-right: 38px;
}

.tray-more {
  margin-right: 40px;
}

.language {
  align-items: center;
}

.status {
  display: flex;
  align-items: center;
  gap: 16px;
  margin: 0 28px 0 36px;
}

.clock {
  align-items: flex-end;
  width: 128px;
}
```
